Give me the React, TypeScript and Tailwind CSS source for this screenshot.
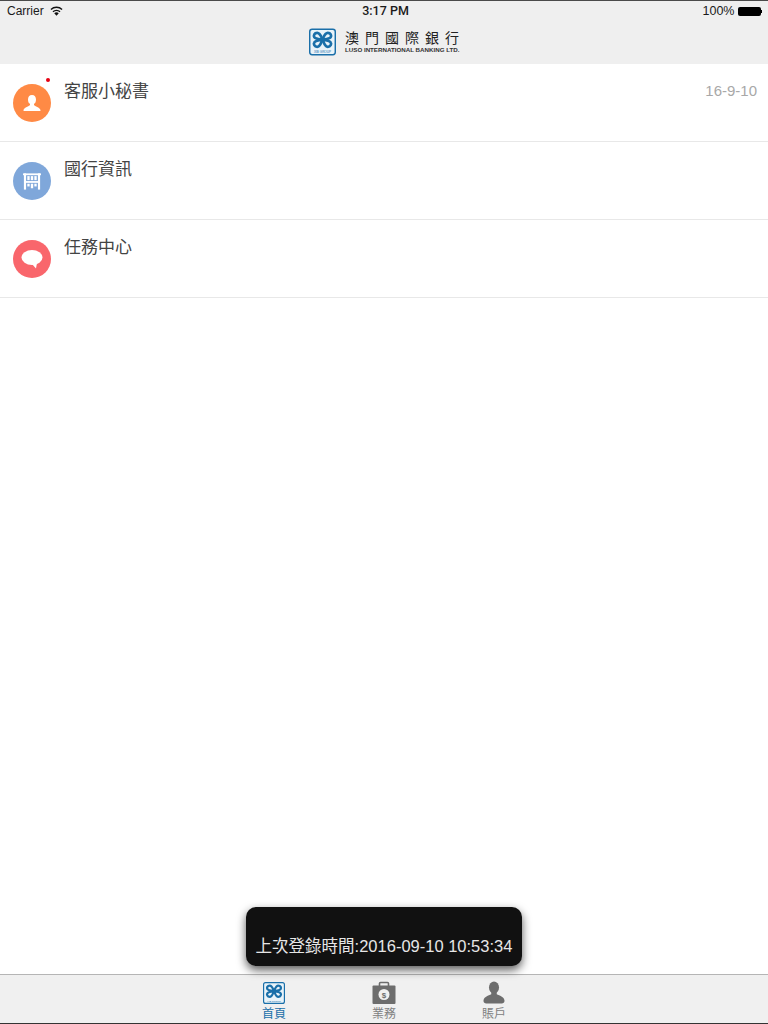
import React from 'react';

const cjk = { fontFamily: '"Liberation Sans", "Noto Sans CJK TC", sans-serif' };

const Clover: React.FC<{ className?: string; color?: string }> = ({ className, color = '#1a6fa9' }) => (
  <svg viewBox="0 0 28 28" className={className}>
    <rect x="0.750" y="0.750" width="26.500" height="26.500" rx="2.500" fill="#e9f3f9" stroke={color} strokeWidth="1.500" />
    <g fill="none" stroke={color} strokeWidth="2.800" strokeLinejoin="round">
      <path d="M14 11.500C12.500 8 11.500 4.500 8.500 4.500 5.500 4.500 4.500 7.500 5.500 9 6.500 11 10.500 11 14 11.500Z" />
      <path d="M14 11.500C15.500 8 16.500 4.500 19.500 4.500 22.500 4.500 23.500 7.500 22.500 9 21.500 11 17.500 11 14 11.500Z" />
      <path d="M14 11.500C12.500 15 11.500 19 8.500 19 5.500 19 4.500 16 5.500 14.500 6.500 12.500 10.500 12 14 11.500Z" />
      <path d="M14 11.500C15.500 15 16.500 19 19.500 19 22.500 19 23.500 16 22.500 14.500 21.500 12.500 17.500 12 14 11.500Z" />
    </g>
    <text x="14" y="25" textAnchor="middle" fontSize="3.200" fill={color} fontFamily="Liberation Sans">XIB GROUP</text>
  </svg>
);

const Wifi = () => (
  <svg viewBox="0 0 14 10" className="w-[13px] h-[10px]">
    <path d="M7 10 4.600 7.300a3.600 3.600 0 0 1 4.800 0Z" fill="#111" />
    <path d="M3.200 5.800a5.700 5.700 0 0 1 7.600 0M1 3.300a9 9 0 0 1 12 0" fill="none" stroke="#111" strokeWidth="1.500" />
  </svg>
);

const PersonIcon = () => (
  <svg viewBox="0 0 20 20" className="w-[20px] h-[20px]">
    <path d="M10 2c-2.700 0-4 2-4 4.500 0 1.500.5 3 1.200 4h5.600c.7-1 1.200-2.500 1.200-4C14 4 12.700 2 10 2Z" fill="#fff" />
    <path d="M8 10v2C7 13.500 2.500 14 1.500 17c-.2.700.2 1 .8 1h15.400c.6 0 1-.3.800-1-1-3-5.500-3.500-6.500-5v-2Z" fill="#fff" />
  </svg>
);

const AbacusIcon = () => (
  <svg viewBox="0 0 20 18" className="w-[18px] h-[17px]">
    <g fill="#fff">
      <rect x="0" y="0" width="20" height="2" />
      <rect x="1" y="0" width="2.400" height="18" />
      <rect x="16.600" y="0" width="2.400" height="18" />
      <rect x="3" y="8.500" width="14" height="2" />
      <rect x="4.800" y="3" width="2.600" height="4.500" />
      <rect x="8.700" y="3" width="2.600" height="4.500" />
      <rect x="12.600" y="3" width="2.600" height="4.500" />
      <rect x="4.800" y="11.500" width="2.600" height="3" />
      <rect x="8.700" y="11.500" width="2.600" height="5" />
      <rect x="12.600" y="11.500" width="2.600" height="3" />
    </g>
  </svg>
);

const BubbleIcon = () => (
  <svg viewBox="0 0 22 20" className="w-[22px] h-[20px]">
    <ellipse cx="11" cy="8.500" rx="10.500" ry="7.500" fill="#fff" />
    <path d="M10 14 16 14 15 19.500Z" fill="#fff" />
  </svg>
);

const BagIcon = () => (
  <svg viewBox="0 0 24 24" className="w-[24px] h-[24px]">
    <path d="M7.500 5V2.500a1 1 0 0 1 1-1h7a1 1 0 0 1 1 1V5" fill="none" stroke="#6d6d6d" strokeWidth="1.600" />
    <rect x="0.500" y="4.500" width="23" height="18.500" rx="1" fill="#6d6d6d" />
    <circle cx="12" cy="13.500" r="5.500" fill="#f0f0f0" />
    <text x="12" y="16.500" textAnchor="middle" fontSize="8" fontWeight="700" fill="#6d6d6d" fontFamily="Liberation Sans">$</text>
  </svg>
);

const UserIcon = () => (
  <svg viewBox="0 0 24 25" className="w-[22px] h-[25px]">
    <ellipse cx="12" cy="7" rx="5.500" ry="6.500" fill="#6d6d6d" />
    <path d="M9 12v2.500C6 16 1 17 .5 21.500c0 2 1.500 3 3 3h17c1.500 0 3-1 3-3C23 17 18 16 15 14.500V12Z" fill="#6d6d6d" />
  </svg>
);

const rows = [
  { title: '客服小秘書', bg: 'bg-[#ff8a45]', icon: <PersonIcon />, date: '16-9-10', dot: true },
  { title: '國行資訊', bg: 'bg-[#7fa7da]', icon: <AbacusIcon /> },
  { title: '任務中心', bg: 'bg-[#f9666c]', icon: <BubbleIcon /> },
];

const Row: React.FC<{ title: string; bg: string; icon: React.ReactNode; date?: string; dot?: boolean }> = ({ title, bg, icon, date, dot }) => (
  <div className="relative h-[78px] flex items-start border-b border-[#e8e8e8] pl-[13px] pr-[11px]">
    <div className={`mt-[20px] w-[38px] h-[38px] rounded-full flex items-center justify-center shrink-0 ${bg}`}>{icon}</div>
    <div className="ml-[13px] mt-[16px] text-[17px] leading-[24px] text-[#444]">{title}</div>
    {date && <div className="ml-auto mt-[16px] text-[15px] leading-[22px] text-[#a8a8a8]">{date}</div>}
    {dot && <span className="absolute left-[46px] top-[14px] w-[4px] h-[4px] rounded-full bg-[#e60012]" />}
  </div>
);

const Tab: React.FC<{ label: string; active?: boolean; children: React.ReactNode }> = ({ label, active, children }) => (
  <div className="w-[110px] flex flex-col items-center">
    <div className="h-[25px] flex items-center justify-center">{children}</div>
    <div className={`text-[12px] leading-[16px] mt-[1px] ${active ? 'text-[#1a6fa9]' : 'text-[#808080]'}`}>{label}</div>
  </div>
);

export default function App() {
  return (
    <div className="relative h-[1024px] flex flex-col bg-white overflow-hidden" style={cjk}>
      <header className="h-[64px] shrink-0 bg-[#efefef] border-t border-[#4a4a4a]">
        <div className="relative h-[20px] flex items-center justify-between pl-[7px] pr-[6px] text-[12px] text-[#1a1a1a]">
          <div className="flex items-center gap-[6px]">
            <span>Carrier</span>
            <Wifi />
          </div>
          <span className="absolute left-[3px] right-0 text-center text-[12.500px] font-medium pointer-events-none [font-family:Roboto,sans-serif]">3:17 PM</span>
          <div className="flex items-center gap-[3px]">
            <span className="text-[12.500px]">100%</span>
            <div className="w-[23px] h-[9px] rounded-[2px] bg-black" />
            <div className="w-[1.500px] h-[3px] bg-black -ml-[3px]" />
          </div>
        </div>
        <div className="flex items-center justify-center h-[43px] gap-[9px] pb-[1px] pl-[1px]">
          <Clover className="w-[27px] h-[28px]" />
          <div className="flex flex-col w-[115px]">
            <div className="text-[14px] leading-[15px] tracking-[6px] text-[#222] whitespace-nowrap">澳門國際銀行</div>
            <div className="text-[6.200px] leading-[8px] font-bold text-[#333] whitespace-nowrap">LUSO INTERNATIONAL BANKING LTD.</div>
          </div>
        </div>
      </header>

      <main className="flex-1">
        {rows.map((r) => (
          <Row key={r.title} {...r} />
        ))}
      </main>

      <div className="absolute left-[246px] top-[907px] w-[276px] h-[59px] rounded-[10px] bg-[#111] shadow-[0_4px_10px_rgba(0,0,0,0.65)] flex items-end justify-center pb-[9px]">
        <span className="text-[16.500px] leading-[22px] text-[#e6e6e6] whitespace-nowrap">上次登錄時間:2016-09-10 10:53:34</span>
      </div>

      <footer className="h-[50px] shrink-0 bg-[#f0f0f0] border-t border-[#b5b5b5] border-b-[1px] border-b-[#333] flex justify-center pt-[5px]">
        <Tab label="首頁" active>
          <Clover className="w-[22px] h-[22px]" />
        </Tab>
        <Tab label="業務">
          <BagIcon />
        </Tab>
        <Tab label="賬戶">
          <UserIcon />
        </Tab>
      </footer>
    </div>
  );
}
